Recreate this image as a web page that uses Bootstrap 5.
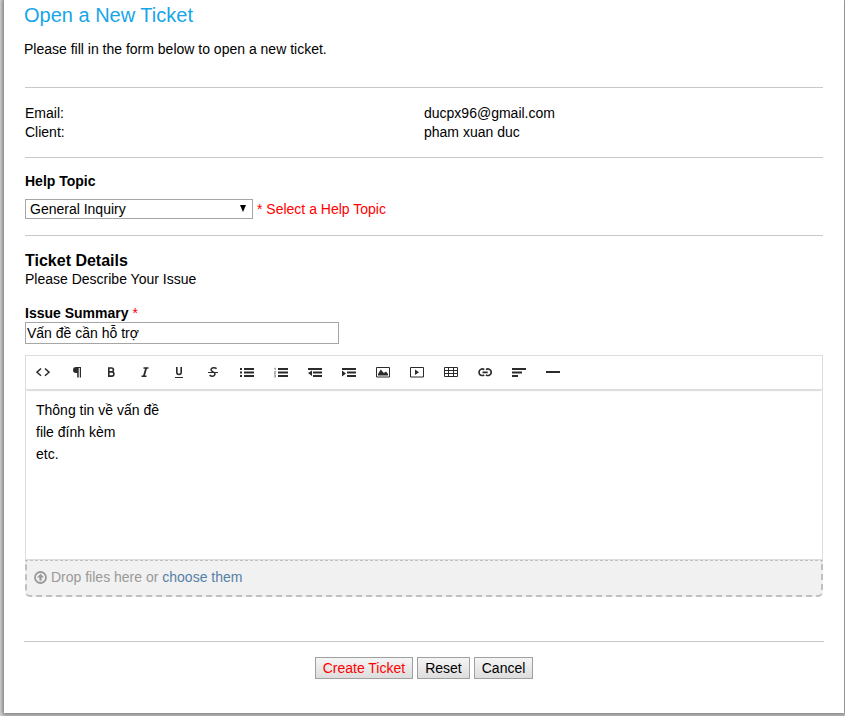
<!DOCTYPE html>
<html lang="en">
<head>
<meta charset="utf-8">
<meta name="viewport" content="width=device-width, initial-scale=1">
<title>Open a New Ticket</title>
<link href="https://cdn.jsdelivr.net/npm/bootstrap@5.3.0/dist/css/bootstrap.min.css" rel="stylesheet">
<style>
body { font-family: "Liberation Sans", Arial, sans-serif; font-size: 14px; line-height: 19px; color: #000; background: linear-gradient(90deg, #d2d2d2, #bdbdbd 4px, #bdbdbd); }
.ticket-page { margin: 0 1px 3px 4px; padding: 3px 20px 34px; background: #fff; box-shadow: 0 0 4px 1px #777; }
.page-title { font-size: 20px; line-height: 24px; color: #16a6e8; margin-bottom: 13px; }
.rule { margin: 0; border-top: 1px solid #c8c8c8; opacity: 1; }
.form-body { padding-left: 1px; padding-right: 1px; }
.intro { margin-bottom: 28px; }
.client-info { padding: 16px 0 15px; }
.topic { padding: 14px 0 16px; }
.topic-label { margin-bottom: 8px; }
.topic-select { width: 228px; height: 20px; border: 1px solid #a6a6a6; background: #fff; color: #000; padding: 0 14px 0 4px; font-size: 14px; line-height: 18px; appearance: none; }
.select-arrow { width: 6px; height: 7px; right: 7px; top: 6px; pointer-events: none; }
.required { color: #f00; }
.details-title { font-size: 16px; line-height: 18px; font-weight: 700; margin: 0; }
.details { padding-top: 16px; }
.details-hint { margin-bottom: 15px; }
.summary-label { line-height: 18px; }
.summary-input { width: 314px; max-width: 100%; height: 22px; border: 1px solid #a6a6a6; padding: 0 1px; color: #000; line-height: 20px; }
.editor { margin-top: 11px; border: 1px solid #ddd; border-bottom: 0; }
.toolbar { height: 34px; border-bottom: 1px solid #ddd; box-shadow: 0 2px 1px -1px rgba(0, 0, 0, .12); }
.tool { width: 34px; height: 33px; padding: 0 1px 2px 0; border: 0; background: none; color: #2b2b2b; }
.tool svg { width: 14px; height: 14px; display: block; margin: auto; }
.editor-text { min-height: 170px; padding: 9px 10px; line-height: 22px; }
.drop-zone { min-height: 37px; background: #f1f1f1; border: 2px dashed #c0c0c0; border-top-width: 1px; border-radius: 0 0 5px 5px; color: #999; padding: 0 7px 1px; box-shadow: 0 -1px #ddd; }
.drop-zone svg { width: 13px; height: 13px; margin-right: 4px; }
.drop-zone a { color: #5580a5; }
.actions { padding-top: 15px; gap: 4px; }
.action-btn { height: 22px; padding: 0 7px; border: 1px solid #a0a0a0; background: linear-gradient(#f5f5f5, #ddd); color: #000; line-height: 19px; }
.action-btn.create { color: #f00; }
.drop-wrap { margin-bottom: 44px; }
</style>
<script src="https://cdn.jsdelivr.net/npm/bootstrap@5.3.0/dist/js/bootstrap.bundle.min.js"></script>
</head>
<body>
<main class="ticket-page">
  <h1 class="page-title fw-normal">Open a New Ticket</h1>
  <p class="intro">Please fill in the form below to open a new ticket.</p>
  <form onsubmit="return false">
    <div class="form-body">
      <hr class="rule">
      <dl class="client-info row g-0 mb-0">
        <dt class="col-6 fw-normal">Email:</dt><dd class="col-6 mb-0">ducpx96@gmail.com</dd>
        <dt class="col-6 fw-normal">Client:</dt><dd class="col-6 mb-0">pham xuan duc</dd>
      </dl>
      <hr class="rule">
      <div class="topic">
        <label class="topic-label d-block fw-bold" for="topic">Help Topic</label>
        <div class="d-flex align-items-center gap-1">
          <div class="position-relative d-flex">
            <select class="topic-select rounded-0" id="topic"><option>General Inquiry</option></select>
            <svg class="select-arrow position-absolute" viewBox="0 0 6 7" aria-hidden="true"><path d="M0 0h6L3 7z"/></svg>
          </div>
          <span class="required">* Select a Help Topic</span>
        </div>
      </div>
      <hr class="rule">
      <section class="details">
        <h3 class="details-title">Ticket Details</h3>
        <div class="details-hint">Please Describe Your Issue</div>
        <label class="summary-label d-block" for="summary"><b>Issue Summary</b> <span class="required">*</span></label>
        <input class="summary-input d-block rounded-0" id="summary" type="text" value="Vấn đề cần hỗ trợ">
        <div class="editor">
          <div class="toolbar d-flex" role="toolbar" aria-label="Formatting">
            <button class="tool" type="button" aria-label="HTML"><svg viewBox="0 0 14 14" fill="none" stroke="currentColor" stroke-width="1.5"><path d="M5 3.5 1 7.2l4 3.6M9 3.5l4 3.7-4 3.6"/></svg></button>
            <button class="tool" type="button" aria-label="Paragraph"><svg viewBox="0 0 14 14" fill="currentColor"><path d="M6 2h5v10.500H9.800V3H8.700v9.500H7.200V8H6a3 3 0 0 1 0-6z"/></svg></button>
            <button class="tool" type="button" aria-label="Bold"><svg viewBox="0 0 14 14" fill="none" stroke="currentColor" stroke-width="1.600"><path d="M4.800 3h2.700a1.900 1.900 0 0 1 0 3.900H4.800h3a2.100 2.100 0 0 1 0 4.200h-3z"/></svg></button>
            <button class="tool" type="button" aria-label="Italic"><svg viewBox="0 0 14 14" fill="none" stroke="currentColor" stroke-width="1.400"><path d="M5.500 3h5M3.500 11.200h5"/><path stroke-width="1.800" d="M8.200 3 5.800 11.200"/></svg></button>
            <button class="tool" type="button" aria-label="Underline"><svg viewBox="0 0 14 14" fill="none" stroke="currentColor" stroke-width="1.600"><path d="M4.800 2v5.200c0 3 4.400 3 4.400 0V2"/><path stroke-width="1" d="M3 12.500h8"/></svg></button>
            <button class="tool" type="button" aria-label="Strikethrough"><svg viewBox="0 0 14 14" fill="none" stroke="currentColor" stroke-width="1.500"><path d="M10.600 3.600C8.500 1.900 5 2.600 5 4.700 5 7.300 9.300 6.600 9 9.200c-.3 2.500-3.500 2.600-5.400.9"/><path stroke-width="1" d="M2 7.500h10"/></svg></button>
            <button class="tool" type="button" aria-label="Bulleted list"><svg viewBox="0 0 14 14" fill="currentColor"><path d="M0 3h2v2H0zm0 3.500h2v2H0zM0 10h2v2H0zM4 3h10.500v2H4zm0 3.500h10.500v2H4zM4 10h10.500v2H4z"/></svg></button>
            <button class="tool" type="button" aria-label="Numbered list"><svg viewBox="0 0 14 14" fill="currentColor"><path d="M4 3h10.500v2H4zm0 3.500h10.500v2H4zM4 10h10.500v2H4z"/><path fill="none" stroke="currentColor" stroke-width=".5" d="M.3 3.400 1.200 3v2.200M.2 6.600h1.500L.3 8.700h1.500M.2 10h1.400l-.8 1 .9 1-1.500.2"/></svg></button>
            <button class="tool" type="button" aria-label="Outdent"><svg viewBox="0 0 14 14" fill="currentColor"><path d="M0 3h14v2H0zm5 3.500h9v2H5zM5 10h9v2H5zM0 3h14v2H0zM4 5.500v5.500L0 8z"/></svg></button>
            <button class="tool" type="button" aria-label="Indent"><svg viewBox="0 0 14 14" fill="currentColor"><path d="M0 3h14v2H0zm5 3.500h9v2H5zM5 10h9v2H5zM0 5.500v6l4-3z"/></svg></button>
            <button class="tool" type="button" aria-label="Image"><svg viewBox="0 0 14 14"><path d="M.5 2.500h13v9.500H.5z" fill="none" stroke="currentColor"/><path fill="currentColor" d="M2 10.500V9l2.800-4.500 3 3.500L10 6.500l2 2.500v1.500z"/></svg></button>
            <button class="tool" type="button" aria-label="Video"><svg viewBox="0 0 14 14"><path d="M.5 2.500h13v9.500H.5z" fill="none" stroke="currentColor"/><path fill="currentColor" d="M5 4.500v5.500l4-2.700z"/></svg></button>
            <button class="tool" type="button" aria-label="Table"><svg viewBox="0 0 14 14" fill="none" stroke="currentColor"><path d="M.5 2.500h13v9H.5zM.5 5.500h13M.5 8.500h13M4.500 2.500v9M9.500 2.500v9"/></svg></button>
            <button class="tool" type="button" aria-label="Link"><svg viewBox="0 0 14 14" fill="none" stroke="currentColor" stroke-width="1.700"><path d="M6.200 4.700C4.500 3.300 1 4 1 7.200s3.500 4 5.200 2.600M8 4.700C9.700 3.300 13.200 4 13.200 7.200s-3.500 4-5.200 2.600M4.500 7.300h5.200"/></svg></button>
            <button class="tool" type="button" aria-label="Alignment"><svg viewBox="0 0 14 14" fill="currentColor"><path d="M0 3h14v2H0zm0 3.500h10v2H0zM0 10h6v2H0z"/></svg></button>
            <button class="tool" type="button" aria-label="Horizontal rule"><svg viewBox="0 0 14 14" fill="currentColor"><path d="M0 6h14v2H0z"/></svg></button>
          </div>
          <div class="editor-text" contenteditable="true" role="textbox" aria-multiline="true" aria-label="Issue details">
            <div>Thông tin về vấn đề</div>
            <div>file đính kèm</div>
            <div>etc.</div>
          </div>
        </div>
        <div class="drop-wrap">
          <div class="drop-zone d-flex align-items-center">
            <svg viewBox="0 0 13 13" aria-hidden="true"><circle cx="6.500" cy="6.500" r="5.500" fill="none" stroke="currentColor" stroke-width="1.800"/><path fill="currentColor" d="M6.500 2.800 10 6.600H7.600v3.200H5.400V6.600H3z"/></svg>
            <span>Drop files here or <a class="text-decoration-none" href="#">choose them</a></span>
          </div>
        </div>
      </section>
    </div>
    <hr class="rule">
    <div class="actions d-flex justify-content-center">
      <button class="action-btn create" type="submit">Create Ticket</button>
      <button class="action-btn" type="reset">Reset</button>
      <button class="action-btn" type="button">Cancel</button>
    </div>
  </form>
</main>
</body>
</html>
